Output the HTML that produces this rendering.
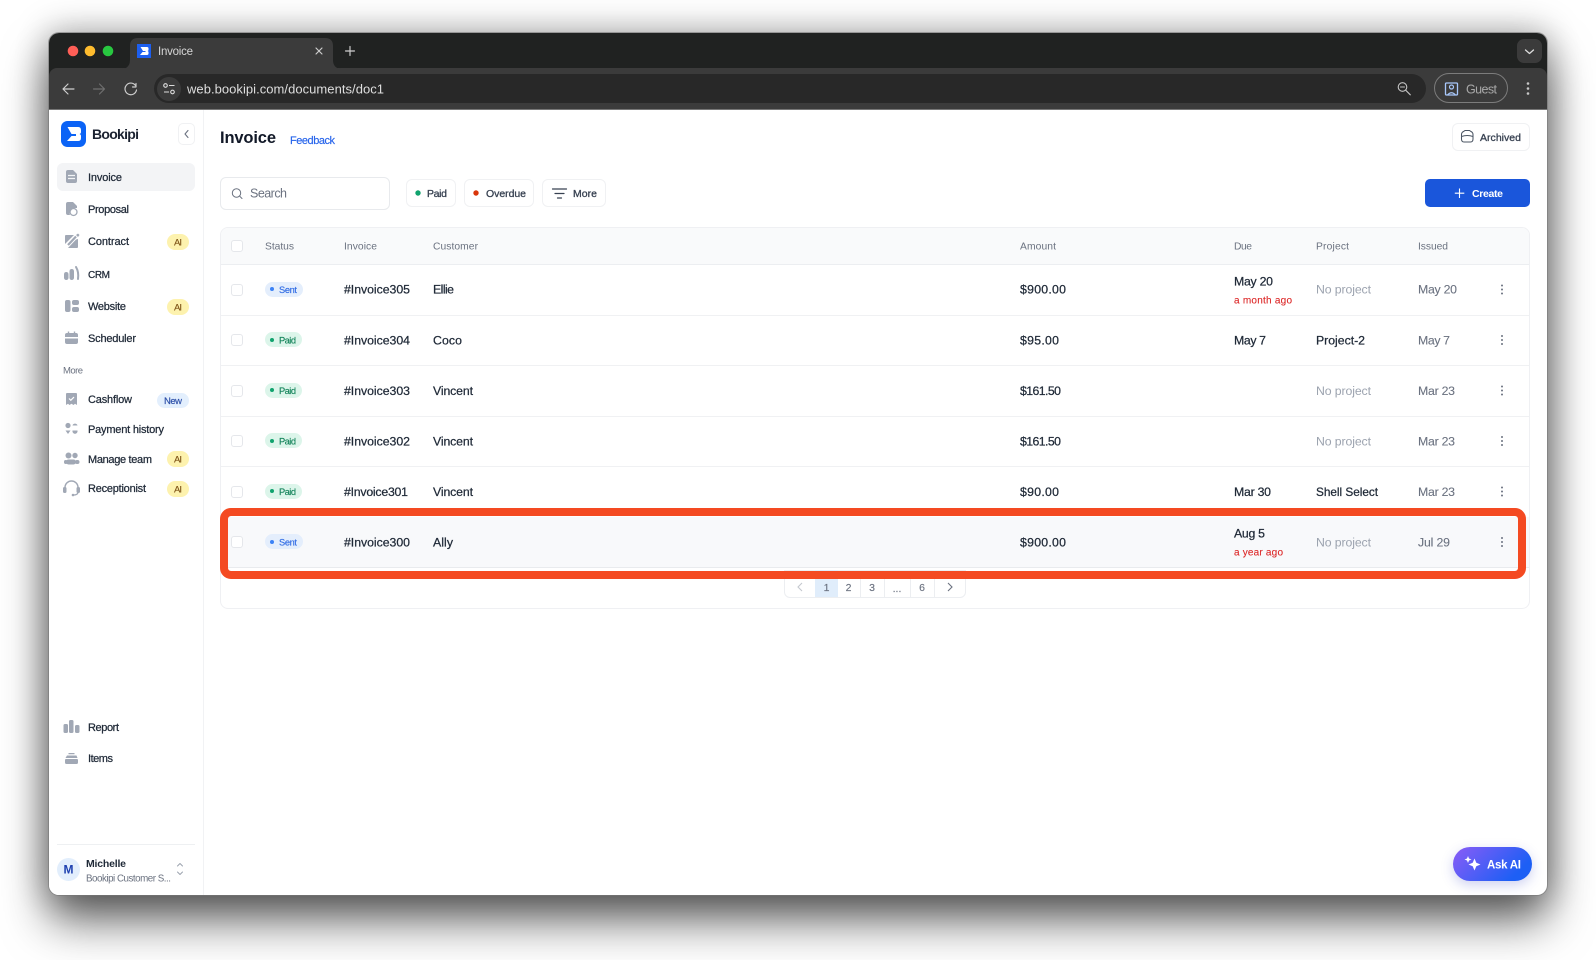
<!DOCTYPE html>
<html lang="en">
<head>
<meta charset="utf-8">
<title>Invoice - Bookipi</title>
<style>
*{box-sizing:border-box}
html,body{margin:0;padding:0;background:#fff}
body{width:1596px;height:960px;overflow:hidden;position:relative;font-family:"Liberation Sans",sans-serif}
#root{position:absolute;left:0;top:0;width:1596px;height:960px;filter:blur(.35px)}
.a{position:absolute}
.win{left:49px;top:33px;width:1498px;height:862px;border-radius:10px;background:#fff;box-shadow:0 0 0 1px #77777799,0 26px 46px 0 rgba(0,0,0,.6),0 0 34px 4px rgba(0,0,0,.28)}
.strip{left:49px;top:33px;width:1498px;height:46px;background:#202221;border-radius:10px 10px 0 0}
.tool{left:49px;top:68px;width:1498px;height:42px;background:#3b3b3b;border-bottom:1px solid #767676;border-radius:8px 8px 0 0}
.addr{left:154px;top:74px;width:1272px;height:29px;background:#282828;border-radius:15px}
.info{left:157px;top:77px;width:24px;height:24px;background:#3b3b3b;border-radius:50%}
.guest{left:1434px;top:73px;width:74px;height:30px;border:1px solid #7c7c7c;border-radius:15px}
.chev{left:1517px;top:39px;width:25px;height:24px;background:#3b3b3b;border-radius:7px}
.side{left:49px;top:110px;width:155px;height:785px;background:#fff;border-right:1px solid #f1f2f4;border-radius:0 0 0 10px}
.act{left:57px;top:163px;width:138px;height:28px;background:#f3f4f6;border-radius:6px}
.col{left:178px;top:123px;width:17px;height:22px;border:1px solid #f0f1f3;border-radius:5px;background:#fff}
.ai{left:167px;width:22px;height:16px;border-radius:8px;background:#fdf2ae}
.new{left:157px;top:393px;width:32px;height:15px;border-radius:8px;background:#e3effd}
.hr{left:57px;top:844px;width:138px;height:1px;background:#eef0f2}
.av{left:57px;top:858px;width:23px;height:23px;border-radius:50%;background:#e2eefc}
.btn{background:#fff;border:1px solid #f0f1f3;border-radius:6px}
.search{left:220px;top:177px;width:170px;height:33px;background:#fff;border:1px solid #e8eaed;border-radius:6px}
.create{left:1425px;top:179px;width:105px;height:28px;background:#1a56db;border-radius:5px}
.card{left:220px;top:227px;width:1310px;height:382px;background:#fff;border:1px solid #eff0f3;border-radius:8px}
.head{left:221px;top:228px;width:1308px;height:37px;background:#f9fafb;border-bottom:1px solid #eceef1;border-radius:7px 7px 0 0}
.row{left:221px;width:1308px;height:1px;background:#f0f1f3}
.r6{left:221px;top:517px;width:1308px;height:51px;background:#f8f9fb;border-bottom:1px solid #e9ebee}
.cb{left:231px;width:12px;height:12px;background:#fff;border:1px solid #e5e7eb;border-radius:3px}
.bs{left:265px;width:38px;height:15px;border-radius:8px;background:#e4eefc}
.bp{left:265px;width:37px;height:15px;border-radius:8px;background:#dcf5ea}
.dot{left:271px;width:4px;height:4px;border-radius:50%}
.pg{left:784px;top:570px;width:182px;height:28px;border:1px solid #eceef1;border-radius:0 0 6px 6px;background:#fff}
.pc{top:570px;width:1px;height:28px;background:#eceef1}
.p1{left:815px;top:570px;width:23px;height:27px;background:#e0edfb}
.box{left:220px;top:508px;width:1306px;height:71px;border:8px solid #f44a22;border-radius:11px}
.ask{left:1453px;top:847px;width:79px;height:34px;border-radius:17px;background:linear-gradient(135deg,#8b5cf6,#1d5ff5 80%);box-shadow:0 4px 12px rgba(60,70,200,.25)}
svg{position:absolute;left:0;top:0}
text{font-family:"Liberation Sans",sans-serif}
.n{font-size:11px;fill:#1f2937;stroke:#1f2937;stroke-width:.25px}
.h{font-size:10.3px;fill:#6b7280}
.c{font-size:12.3px;fill:#1f2937;stroke:#1f2937;stroke-width:.25px}
.g{font-size:12.3px;fill:#9ca3af}
.i{font-size:12.3px;fill:#6b7280;stroke:#6b7280;stroke-width:.1px}
.o{font-size:10px;fill:#dc2626;stroke:#dc2626;stroke-width:.1px}
.f{font-size:10.5px;fill:#374151;stroke:#374151;stroke-width:.3px}
.st{font-size:9.3px;fill:#2f6be4;stroke:#2f6be4;stroke-width:.15px}
.pt{font-size:9.3px;fill:#16855c;stroke:#16855c;stroke-width:.15px}
.pn{font-size:10.5px;fill:#6b7280;stroke:#6b7280;stroke-width:.15px;text-anchor:middle}
.bd{font-size:9.5px;fill:#7a4f12;stroke:#7a4f12;stroke-width:.1px}
.ic{fill:#a1a8b5}
.ln{fill:none;stroke:#cfcfcf;stroke-width:1.15;stroke-linecap:round;stroke-linejoin:round}
</style>
</head>
<body>
<div id="root">
<div class="a win"></div>
<div class="a strip"></div>
<div class="a tool"></div>
<div class="a addr"></div>
<div class="a info"></div>
<div class="a guest"></div>
<div class="a chev"></div>

<div class="a side"></div>
<div class="a act"></div>
<div class="a col"></div>
<div class="a ai" style="top:234px"></div>
<div class="a ai" style="top:299px"></div>
<div class="a new"></div>
<div class="a ai" style="top:451px"></div>
<div class="a ai" style="top:481px"></div>
<div class="a hr"></div>
<div class="a av"></div>

<div class="a btn" style="left:1452px;top:123px;width:78px;height:28px"></div>
<div class="a search"></div>
<div class="a btn" style="left:406px;top:179px;width:50px;height:28px"></div>
<div class="a btn" style="left:464px;top:179px;width:70px;height:28px"></div>
<div class="a btn" style="left:542px;top:179px;width:64px;height:28px"></div>
<div class="a create"></div>

<div class="a card"></div>
<div class="a head"></div>
<div class="a row" style="top:315px"></div>
<div class="a row" style="top:365px"></div>
<div class="a row" style="top:416px"></div>
<div class="a row" style="top:466px"></div>
<div class="a row" style="top:517px"></div>
<div class="a r6"></div>

<div class="a cb" style="top:240px"></div>
<div class="a cb" style="top:284px"></div>
<div class="a cb" style="top:334px"></div>
<div class="a cb" style="top:385px"></div>
<div class="a cb" style="top:435px"></div>
<div class="a cb" style="top:486px"></div>
<div class="a cb" style="top:536px"></div>

<div class="a bs" style="top:282px"></div><div class="a dot" style="top:287px;left:270px;background:#3b82f6"></div>
<div class="a bp" style="top:332px"></div><div class="a dot" style="top:338px;left:270px;background:#10a36e"></div>
<div class="a bp" style="top:383px"></div><div class="a dot" style="top:388px;left:270px;background:#10a36e"></div>
<div class="a bp" style="top:433px"></div><div class="a dot" style="top:439px;left:270px;background:#10a36e"></div>
<div class="a bp" style="top:484px"></div><div class="a dot" style="top:489px;left:270px;background:#10a36e"></div>
<div class="a bs" style="top:534px"></div><div class="a dot" style="top:540px;left:270px;background:#3b82f6"></div>

<div class="a pg"></div>
<div class="a p1"></div>
<div class="a pc" style="left:860px"></div>
<div class="a pc" style="left:884px"></div>
<div class="a pc" style="left:910px"></div>
<div class="a pc" style="left:934px"></div>
<div class="a box"></div>
<div class="a ask"></div>

<svg width="1596" height="960" viewBox="0 0 1596 960">
  <!-- Browser tab -->
  <path d="M122 69 Q130 68 130 60 V46 Q130 38 138 38 H325 Q333 38 333 46 V60 Q333 68 341 69 Z" fill="#3b3b3b"/>
  <circle cx="73" cy="51" r="5.3" fill="#ff5f57"/>
  <circle cx="90" cy="51" r="5.3" fill="#febc2e"/>
  <circle cx="108" cy="51" r="5.3" fill="#28c840"/>
  <rect x="137" y="44" width="14" height="14" fill="#1d5ff0"/>
  <path d="M140.500 47H147Q148.500 47 148.500 48.500V50Q148.500 50.800 147.500 51Q148.500 51.200 148.500 52V53.500Q148.500 55 147 55H140L142.500 52H145.500V51H143L140.500 47Z" fill="#fff"/>
  <text x="158" y="55" font-size="11.500" fill="#d6d6d6" textLength="35">Invoice</text>
  <path class="ln" d="M316 48l6 6M322 48l-6 6"/>
  <path class="ln" d="M350 46.500v9M345.500 51h9"/>
  <path d="M1525.500 50l4 3.500 4-3.500" fill="none" stroke="#dcdcdc" stroke-width="1.300" stroke-linecap="round" stroke-linejoin="round"/>

  <!-- Toolbar -->
  <path class="ln" d="M74 89H63M68 84l-5 5 5 5"/>
  <path d="M93.500 89H104.500M99.500 84l5 5-5 5" fill="none" stroke="#6f6f6f" stroke-width="1.150" stroke-linecap="round" stroke-linejoin="round"/>
  <path class="ln" d="M135.500 85.500A5.800 5.800 0 1 0 136.500 90M136 83.500v3.500h-3.500"/>
  <circle cx="165.500" cy="85.500" r="1.800" fill="none" stroke="#dcdcdc" stroke-width="1.100"/>
  <circle cx="172.500" cy="92" r="1.800" fill="none" stroke="#dcdcdc" stroke-width="1.100"/>
  <path d="M169 85.500h5.500M164 92h5" stroke="#dcdcdc" stroke-width="1.100" fill="none"/>
  <text x="187" y="93.500" font-size="13" fill="#dedede" textLength="197">web.bookipi.com/documents/doc1</text>
  <circle cx="1402.500" cy="87" r="4.300" fill="none" stroke="#c4c4c4" stroke-width="1.100"/>
  <path d="M1405.800 90.300l4.500 4.500M1400.500 87h4" stroke="#c4c4c4" stroke-width="1.100" fill="none" stroke-linecap="round"/>
  <rect x="1445.500" y="83" width="12" height="12" rx="1" fill="none" stroke="#a8c7fa" stroke-width="1.300"/>
  <circle cx="1451.500" cy="87" r="2" fill="none" stroke="#a8c7fa" stroke-width="1.200"/>
  <path d="M1447.500 95q4-4.500 8 0" fill="none" stroke="#a8c7fa" stroke-width="1.200"/>
  <text x="1466" y="93.500" font-size="12.500" fill="#a9a9a9" textLength="31">Guest</text>
  <circle cx="1528" cy="83.500" r="1.300" fill="#c8c8c8"/>
  <circle cx="1528" cy="88.500" r="1.300" fill="#c8c8c8"/>
  <circle cx="1528" cy="93.500" r="1.300" fill="#c8c8c8"/>

  <!-- Logo -->
  <rect x="61" y="121" width="25" height="26" rx="6.500" fill="#0b63f6"/>
  <path d="M67.500 127H78Q81 127 81 130V132Q81 133.500 79.500 134Q81 134.500 81 136V138Q81 141 78 141H67L71.500 136H76V134H71.500Z" fill="#fff"/>
  <text x="92" y="139" font-size="14" font-weight="700" fill="#1b2230" textLength="47">Bookipi</text>
  <path d="M188 130.500l-3 3.500 3 3.500" fill="none" stroke="#6b7280" stroke-width="1.100" stroke-linecap="round" stroke-linejoin="round"/>

  <!-- Sidebar icons -->
  <path class="ic" d="M68 170H73L77 174V181Q77 183 75 183H68Q66 183 66 181V172Q66 170 68 170Z"/>
  <path d="M68 175.500H75M68 178.500H75" stroke="#f3f4f6" stroke-width="1.200"/>
  <path class="ic" d="M68 202H73L77 206V208H72.500L69.500 213.500L70 215H68Q66 215 66 213V204Q66 202 68 202Z"/>
  <circle cx="73.500" cy="212" r="3.500" fill="none" stroke="#a1a8b5" stroke-width="1.300"/>
  <path class="ic" d="M65 236Q65 235 66 235H74L65 244ZM78 239V247Q78 248 77 248H68L76 239.500Z"/>
  <path d="M68 245L76 236.500" stroke="#a1a8b5" stroke-width="2.200"/>
  <path class="ic" d="M76 235l2-1.500 1.500 1.500-1.500 2z"/>
  <rect class="ic" x="64" y="272" width="4.500" height="8" rx="2.200"/>
  <rect class="ic" x="69.500" y="269" width="4.500" height="11" rx="2.200"/>
  <path d="M76 267Q79 272 78 279" fill="none" stroke="#a1a8b5" stroke-width="2" stroke-linecap="round"/>
  <rect class="ic" x="65" y="300" width="5.500" height="12" rx="2"/>
  <rect class="ic" x="72" y="300" width="7" height="5" rx="2"/>
  <rect class="ic" x="72" y="307" width="7" height="5" rx="2"/>
  <path class="ic" d="M67 333H76Q78 333 78 335V337H65V335Q65 333 67 333ZM65 338.500H78V342Q78 344 76 344H67Q65 344 65 342Z"/>
  <path d="M68.500 331.500v2M74.500 331.500v2" stroke="#a1a8b5" stroke-width="1.400"/>
  <path class="ic" d="M67 393H76Q77 393 77 394V405L75 403.800 73.500 405 71.500 403.800 69.500 405 68 403.800 66 405V394Q66 393 67 393Z"/>
  <path d="M69 398.500l1.800 1.800 3.200-3.200" fill="none" stroke="#fff" stroke-width="1.200"/>
  <circle class="ic" cx="68" cy="425.500" r="2.600"/><path d="M72.500 425.500a2.600 2.600 0 0 1 5 0z" class="ic"/>
  <path d="M65.500 430.500h5l-2.500 3.500zM72.500 430.500a2.600 2.600 0 1 0 5 0z" class="ic"/>
  <circle class="ic" cx="68.500" cy="455.500" r="3"/><circle class="ic" cx="75" cy="455.500" r="2.700"/>
  <rect class="ic" x="66" y="459.500" width="10" height="5" rx="2.500"/>
  <rect class="ic" x="64" y="460" width="3.500" height="4" rx="1.700"/><rect class="ic" x="75" y="460" width="4.500" height="4" rx="2"/>
  <path d="M65 490V487.500A6.500 6.500 0 0 1 78 487.500V490" fill="none" stroke="#a1a8b5" stroke-width="1.500"/>
  <rect class="ic" x="63" y="487" width="3.500" height="6" rx="1.500"/><rect class="ic" x="76.500" y="487" width="3.500" height="6" rx="1.500"/>
  <path d="M78 492.500Q77.500 495 73.500 495" fill="none" stroke="#a1a8b5" stroke-width="1.300"/><circle class="ic" cx="73" cy="495" r="1.300"/>
  <rect class="ic" x="63.500" y="724" width="4.500" height="9" rx="1.500"/>
  <rect class="ic" x="69" y="720" width="4.500" height="13" rx="1.500"/>
  <rect class="ic" x="75" y="725" width="4.500" height="8" rx="1.500"/>
  <path class="ic" d="M68.500 753H74.500V754.200H68.500ZM67 755.500H76.500L77.500 758H65.500ZM66 759H77Q78 759 78 760V762.500Q78 764 76.500 764H66.500Q65 764 65 762.500V760Q65 759 66 759Z"/>

  <!-- Sidebar text -->
  <text class="n" x="88" y="181" textLength="34">Invoice</text>
  <text class="n" x="88" y="213" textLength="41">Proposal</text>
  <text class="n" x="88" y="245" textLength="41">Contract</text>
  <text class="n" x="88" y="278" textLength="22" style="font-size:10px">CRM</text>
  <text class="n" x="88" y="310" textLength="38">Website</text>
  <text class="n" x="88" y="342" textLength="48">Scheduler</text>
  <text x="63" y="373.500" font-size="9.500" fill="#6b7280" textLength="20">More</text>
  <text class="n" x="88" y="403" textLength="44">Cashflow</text>
  <text class="n" x="88" y="433" textLength="76">Payment history</text>
  <text class="n" x="88" y="463" textLength="64">Manage team</text>
  <text class="n" x="88" y="492" textLength="58">Receptionist</text>
  <text class="n" x="88" y="731" textLength="31">Report</text>
  <text class="n" x="88" y="762" textLength="25">Items</text>
  <text class="bd" x="174" y="245.500" textLength="8">AI</text>
  <text class="bd" x="174" y="310.500" textLength="8">AI</text>
  <text class="bd" x="174" y="462.500" textLength="8">AI</text>
  <text class="bd" x="174" y="492.500" textLength="8">AI</text>
  <text x="164" y="404" font-size="9.500" fill="#2b4ea8" stroke="#2b4ea8" stroke-width=".15" textLength="18">New</text>
  <text x="63.500" y="873.500" font-size="12" font-weight="700" fill="#1e40af" textLength="10">M</text>
  <text x="86" y="867" font-size="10.500" font-weight="700" fill="#1f2937" textLength="40">Michelle</text>
  <text x="86" y="881.500" font-size="9.800" fill="#6b7280" textLength="85">Bookipi Customer S...</text>
  <path d="M177.500 866l2.500-2.500 2.500 2.500M177.500 872l2.500 2.500 2.500-2.500" fill="none" stroke="#9ca3af" stroke-width="1" stroke-linecap="round" stroke-linejoin="round"/>

  <!-- Top bar -->
  <text x="220" y="143" font-size="16.500" font-weight="700" fill="#111827" textLength="56">Invoice</text>
  <text x="290" y="144" font-size="11" fill="#2563eb" stroke="#2563eb" stroke-width=".15" textLength="45">Feedback</text>
  <path d="M1461.500 136V134.500Q1461.500 132.500 1463.500 131.500L1465 130.500H1469.500L1471 131.500Q1473 132.500 1473 134.500V139Q1473 142 1470.500 142H1464Q1461.500 142 1461.500 139ZM1461.500 136.500Q1467.200 134.500 1473 136.500" fill="none" stroke="#4b5563" stroke-width="1.050"/>
  <text class="f" x="1480" y="141" textLength="41">Archived</text>

  <!-- Filters -->
  <circle cx="236.500" cy="193" r="4.200" fill="none" stroke="#6b7280" stroke-width="1"/>
  <path d="M239.700 196.200l2.300 2.300" stroke="#6b7280" stroke-width="1" stroke-linecap="round"/>
  <text x="250" y="197.500" font-size="12.500" fill="#6b7280" textLength="37">Search</text>
  <circle cx="418" cy="193" r="2.700" fill="#10a36e"/>
  <text class="f" x="427" y="197" textLength="20">Paid</text>
  <circle cx="476" cy="193" r="2.700" fill="#d9360b"/>
  <text class="f" x="486" y="197" textLength="40">Overdue</text>
  <path d="M552.500 189h14M555 193.500h9M557.500 198h4" stroke="#374151" stroke-width="1.200" stroke-linecap="round"/>
  <text class="f" x="573" y="197" textLength="24">More</text>
  <path d="M1459.500 188.500v9.500M1454.800 193.200h9.500" stroke="#fff" stroke-width="1.100"/>
  <text x="1472" y="197" font-size="10.500" font-weight="700" fill="#fff" textLength="31">Create</text>

  <!-- Table head -->
  <text class="h" x="265" y="249.500" textLength="29">Status</text>
  <text class="h" x="344" y="249.500" textLength="33">Invoice</text>
  <text class="h" x="433" y="249.500" textLength="45">Customer</text>
  <text class="h" x="1020" y="249.500" textLength="36">Amount</text>
  <text class="h" x="1234" y="249.500" textLength="18">Due</text>
  <text class="h" x="1316" y="249.500" textLength="33">Project</text>
  <text class="h" x="1418" y="249.500" textLength="30">Issued</text>

  <!-- Row 1 -->
  <text class="st" x="279" y="293" textLength="18">Sent</text>
  <text class="c" x="344" y="293.500" textLength="66">#Invoice305</text>
  <text class="c" x="433" y="293.500" textLength="21">Ellie</text>
  <text class="c" x="1020" y="293.500" textLength="46">$900.00</text>
  <text class="c" x="1234" y="285.500" textLength="39">May 20</text>
  <text class="o" x="1234" y="303.500" textLength="58">a month ago</text>
  <text class="g" x="1316" y="293.500" textLength="55">No project</text>
  <text class="i" x="1418" y="293.500" textLength="39">May 20</text>
  <!-- Row 2 -->
  <text class="pt" x="279" y="343.500" textLength="17">Paid</text>
  <text class="c" x="344" y="344.500" textLength="66">#Invoice304</text>
  <text class="c" x="433" y="344.500" textLength="29">Coco</text>
  <text class="c" x="1020" y="344.500" textLength="39">$95.00</text>
  <text class="c" x="1234" y="344.500" textLength="32">May 7</text>
  <text class="c" x="1316" y="344.500" textLength="49">Project-2</text>
  <text class="i" x="1418" y="344.500" textLength="32">May 7</text>
  <!-- Row 3 -->
  <text class="pt" x="279" y="394" textLength="17">Paid</text>
  <text class="c" x="344" y="395" textLength="66">#Invoice303</text>
  <text class="c" x="433" y="395" textLength="40">Vincent</text>
  <text class="c" x="1020" y="395" textLength="41">$161.50</text>
  <text class="g" x="1316" y="395" textLength="55">No project</text>
  <text class="i" x="1418" y="395" textLength="37">Mar 23</text>
  <!-- Row 4 -->
  <text class="pt" x="279" y="444.500" textLength="17">Paid</text>
  <text class="c" x="344" y="445.500" textLength="66">#Invoice302</text>
  <text class="c" x="433" y="445.500" textLength="40">Vincent</text>
  <text class="c" x="1020" y="445.500" textLength="41">$161.50</text>
  <text class="g" x="1316" y="445.500" textLength="55">No project</text>
  <text class="i" x="1418" y="445.500" textLength="37">Mar 23</text>
  <!-- Row 5 -->
  <text class="pt" x="279" y="495" textLength="17">Paid</text>
  <text class="c" x="344" y="496" textLength="64">#Invoice301</text>
  <text class="c" x="433" y="496" textLength="40">Vincent</text>
  <text class="c" x="1020" y="496" textLength="39">$90.00</text>
  <text class="c" x="1234" y="496" textLength="37">Mar 30</text>
  <text class="c" x="1316" y="496" textLength="62" style="font-size:11.800px">Shell Select</text>
  <text class="i" x="1418" y="496" textLength="37">Mar 23</text>
  <!-- Row 6 -->
  <text class="st" x="279" y="545.500" textLength="18">Sent</text>
  <text class="c" x="344" y="546.500" textLength="66">#Invoice300</text>
  <text class="c" x="433" y="546.500" textLength="20">Ally</text>
  <text class="c" x="1020" y="546.500" textLength="46">$900.00</text>
  <text class="c" x="1234" y="537.500" textLength="31">Aug 5</text>
  <text class="o" x="1234" y="555.500" textLength="49">a year ago</text>
  <text class="g" x="1316" y="546.500" textLength="55">No project</text>
  <text class="i" x="1418" y="546.500" textLength="32">Jul 29</text>

  <!-- Row menus -->
  <g fill="#6b7280">
    <circle cx="1502" cy="285.500" r="1"/><circle cx="1502" cy="289.500" r="1"/><circle cx="1502" cy="293.500" r="1"/>
    <circle cx="1502" cy="336" r="1"/><circle cx="1502" cy="340" r="1"/><circle cx="1502" cy="344" r="1"/>
    <circle cx="1502" cy="386.500" r="1"/><circle cx="1502" cy="390.500" r="1"/><circle cx="1502" cy="394.500" r="1"/>
    <circle cx="1502" cy="437" r="1"/><circle cx="1502" cy="441" r="1"/><circle cx="1502" cy="445" r="1"/>
    <circle cx="1502" cy="487.500" r="1"/><circle cx="1502" cy="491.500" r="1"/><circle cx="1502" cy="495.500" r="1"/>
    <circle cx="1502" cy="538" r="1"/><circle cx="1502" cy="542" r="1"/><circle cx="1502" cy="546" r="1"/>
  </g>

  <!-- Pagination -->
  <path d="M802 583l-4 4 4 4" fill="none" stroke="#c4c8cf" stroke-width="1.100"/>
  <text class="pn" x="826.500" y="591">1</text>
  <text class="pn" x="848.500" y="591">2</text>
  <text class="pn" x="872" y="591">3</text>
  <text class="pn" x="897" y="592">...</text>
  <text class="pn" x="922" y="591">6</text>
  <path d="M948 583l4 4-4 4" fill="none" stroke="#6b7280" stroke-width="1.100"/>

  <!-- Ask AI -->
  <path fill="#fff" d="M1474.500 858.500l1.800 4.200 4.200 1.800-4.200 1.800-1.800 4.200-1.800-4.200-4.200-1.800 4.200-1.800zM1468 856l1 2.500 2.500 1-2.500 1-1 2.500-1-2.500-2.500-1 2.500-1z"/>
  <text x="1487" y="868.500" font-size="11.500" font-weight="700" fill="#fff" textLength="34">Ask AI</text>
</svg>
</div>
</body>
</html>
